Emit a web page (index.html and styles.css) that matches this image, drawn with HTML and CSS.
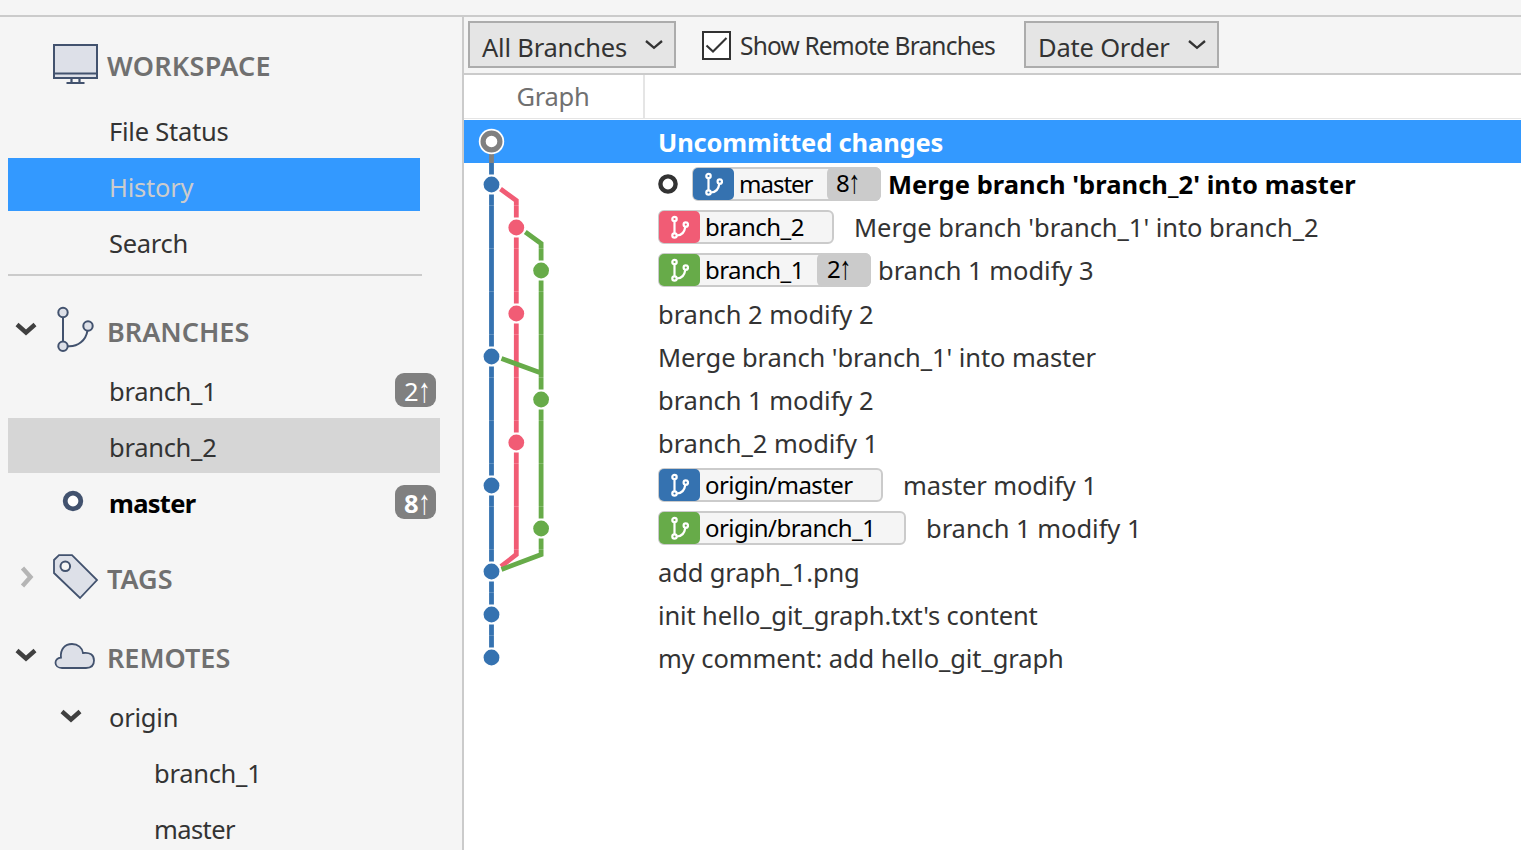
FILE: index.html
```html
<!DOCTYPE html>
<html lang="en">
<head>
<meta charset="utf-8">
<title>Repository history</title>
<link rel="stylesheet" href="styles.css">
</head>
<body>
<svg class="defs" width="0" height="0">
  <symbol id="chev" viewBox="0 0 22 14"><path d="M2 2.500 11 10.500 20 2.500" fill="none" stroke="currentColor" stroke-width="4.400"/></symbol>
  <symbol id="caret" viewBox="0 0 18 12"><path d="M1 2 9 8.800 17 2" fill="none" stroke="currentColor" stroke-width="2.300"/></symbol>
  <symbol id="fork" viewBox="0 0 18 24"><g fill="none" stroke="#fff" stroke-width="2.200"><path d="M3.500 6v12M6 20.500c5 0 7.500-3.500 8.300-8.500"/><circle cx="3.500" cy="4" r="2.200"/><circle cx="3.500" cy="20.500" r="2.200"/><circle cx="14.800" cy="9.600" r="2.200"/></g></symbol>
</svg>
<div class="app">
  <div class="topbar"></div>
  <div class="main">
    <nav class="sidebar">
      <div class="section workspace"><span class="toggle"></span>
        <span class="icon"><svg width="46" height="42" viewBox="0 0 46 42"><rect x="1" y="2" width="43" height="33" fill="#dde0e8" stroke="#42526e" stroke-width="2"/><path d="M2 30.500h41" stroke="#42526e" stroke-width="2"/><path d="M18.500 36v4M26.500 36v4M13.500 40h18" stroke="#42526e" stroke-width="2.200"/></svg></span>
        <h2 class="t-workspace">WORKSPACE</h2></div>
      <div class="item"><span class="t-file">File Status</span></div>
      <div class="item active"><span class="t-history">History</span></div>
      <div class="item"><span class="t-search">Search</span></div>
      <div class="rule"></div>
      <div class="section branches"><span class="toggle"><svg width="22" height="14"><use href="#chev"/></svg></span>
        <span class="icon"><svg width="46" height="48" viewBox="0 0 46 48"><g fill="none" stroke="#42526e" stroke-width="2"><path d="M10 11v24M15 40.300c10 .7 18-6 19.500-16"/><g fill="#dde0e8"><circle cx="10" cy="6.500" r="4.700"/><circle cx="10" cy="40.300" r="4.700"/><circle cx="35" cy="20" r="4.700"/></g></g></svg></span>
        <h2>BRANCHES</h2></div>
      <div class="item"><span class="t-b1">branch_1</span><span class="count">2<i>↑</i></span></div>
      <div class="item hover"><span class="t-b1">branch_2</span></div>
      <div class="item current"><svg class="head" width="22" height="22"><circle cx="11" cy="11" r="7.800" fill="#fff" stroke="#42526e" stroke-width="4.800"/></svg><span class="t-masterb">master</span><span class="count">8<i>↑</i></span></div>
      <div class="section tags"><span class="toggle closed"><svg width="22" height="14"><use href="#chev"/></svg></span>
        <span class="icon"><svg width="46" height="46" viewBox="0 0 46 46"><path d="M1 6 6 1.200H19L44 26 27 44 1 19Z" fill="#dde0e8" stroke="#42526e" stroke-width="1.800"/><circle cx="12.300" cy="12.300" r="4.800" fill="#f5f5f5" stroke="#42526e" stroke-width="2"/></svg></span>
        <h2>TAGS</h2></div>
      <div class="section remotes"><span class="toggle"><svg width="22" height="14"><use href="#chev"/></svg></span>
        <span class="icon"><svg width="46" height="28" viewBox="0 0 46 28"><path d="M9 26C.5 26 .5 16 8 15.700 7 7 12 2 19 2c6 0 10.500 4 11 9 7-1 11 2 11 7.500S37.500 26 33 26Z" fill="#dde0e8" stroke="#42526e" stroke-width="1.800"/></svg></span>
        <h2>REMOTES</h2></div>
      <div class="item"><svg class="expand" width="22" height="14"><use href="#chev"/></svg><span class="t-file">origin</span></div>
      <div class="item nested"><span class="t-b1">branch_1</span></div>
      <div class="item nested"><span class="t-master">master</span></div>
    </nav>
    <section class="content">
      <div class="toolbar">
        <button class="select all"><span class="t-all">All Branches</span><svg width="18" height="12"><use href="#caret"/></svg></button>
        <label class="check"><svg width="29" height="29" viewBox="0 0 29 29"><rect x="1" y="1" width="27" height="27" fill="#fff" stroke="#333" stroke-width="2"/><path d="M4.500 14.500 11 20.500 24.500 7" fill="none" stroke="#333" stroke-width="2.100"/></svg><span class="t-show">Show Remote Branches</span></label>
        <button class="select order"><span class="t-all">Date Order</span><svg width="18" height="12"><use href="#caret"/></svg></button>
      </div>
      <div class="columns"><div class="graph-head"><span>Graph</span></div></div>
      <div class="log">
        <div class="row selected"><b class="t-unc">Uncommitted changes</b></div>
        <div class="row"><svg class="ring" width="20" height="20"><circle cx="10" cy="10" r="7.600" fill="#fff" stroke="#333" stroke-width="4.400"/></svg><span class="ref r-master"><span class="mark blue"><svg width="18" height="24"><use href="#fork"/></svg></span><span class="name t-rmaster">master</span><span class="ahead">8<i>↑</i></span></span><b class="t-merge">Merge branch 'branch_2' into master</b></div>
        <div class="row"><span class="ref r-b2"><span class="mark pink"><svg width="18" height="24"><use href="#fork"/></svg></span><span class="name">branch_2</span></span><span class="msg">Merge branch 'branch_1' into branch_2</span></div>
        <div class="row"><span class="ref r-b1"><span class="mark green"><svg width="18" height="24"><use href="#fork"/></svg></span><span class="name">branch_1</span><span class="ahead two">2<i>↑</i></span></span><span class="msg">branch 1 modify 3</span></div>
        <div class="row"><span class="msg">branch 2 modify 2</span></div>
        <div class="row"><span class="msg mid">Merge branch 'branch_1' into master</span></div>
        <div class="row"><span class="msg">branch 1 modify 2</span></div>
        <div class="row"><span class="msg">branch_2 modify 1</span></div>
        <div class="row"><span class="ref r-om"><span class="mark blue"><svg width="18" height="24"><use href="#fork"/></svg></span><span class="name">origin/master</span></span><span class="msg tight">master modify 1</span></div>
        <div class="row"><span class="ref r-ob"><span class="mark green"><svg width="18" height="24"><use href="#fork"/></svg></span><span class="name">origin/branch_1</span></span><span class="msg">branch 1 modify 1</span></div>
        <div class="row"><span class="msg tight">add graph_1.png</span></div>
        <div class="row"><span class="msg tight">init hello_git_graph.txt's content</span></div>
        <div class="row"><span class="msg mid">my comment: add hello_git_graph</span></div>
        <svg class="graph" width="180" height="559" viewBox="0 0 180 559">
          <g fill="none" stroke-width="4.800">
            <path d="M27.500 32V43" stroke="#808080"/>
            <g stroke="#3572b0"><path d="M27.500 43V54.500M27.500 74.500V226.500M27.500 246.500V355.500M27.500 375.500V441.500M27.500 461.500V484.500M27.500 504.500V527.500"/></g>
            <path d="M36.500 69 52.300 80.500V97.500M52.300 117.500V183.500M52.300 203.500V312.500M52.300 332.500V434.500L37 446.500" stroke="#f15c75"/>
            <path d="M61.300 112 77.100 123.500V140.500M77.100 160.500V269.500M77.100 289.500V398.500M77.100 418.500V434.500L37.500 449.500M37.500 238.500 77.100 253" stroke="#67ab49"/>
          </g>
          <path d="M24 85.500H80M24 128.500H80M24 171.500H80M24 214.500H80M24 257.500H80M24 300.500H80M24 343.500H80M24 386.500H80M24 429.500H80M24 472.500H80M24 515.500H80" stroke="#fff" stroke-opacity=".2"/>
          <circle cx="27.500" cy="21.500" r="12.700" fill="#fff"/><circle cx="27.500" cy="21.500" r="8.400" fill="#fff" stroke="#808080" stroke-width="5.200"/>
          <g fill="#3572b0"><circle cx="27.500" cy="64.500" r="7.900"/><circle cx="27.500" cy="236.500" r="7.900"/><circle cx="27.500" cy="365.500" r="7.900"/><circle cx="27.500" cy="451.500" r="7.900"/><circle cx="27.500" cy="494.500" r="7.900"/><circle cx="27.500" cy="537.500" r="7.900"/></g>
          <g fill="#f15c75"><circle cx="52.300" cy="107.500" r="7.900"/><circle cx="52.300" cy="193.500" r="7.900"/><circle cx="52.300" cy="322.500" r="7.900"/></g>
          <g fill="#67ab49"><circle cx="77.100" cy="150.500" r="7.900"/><circle cx="77.100" cy="279.500" r="7.900"/><circle cx="77.100" cy="408.500" r="7.900"/></g>
        </svg>
      </div>
    </section>
  </div>
</div>
</body>
</html>
```
FILE: styles.css
```css
* { box-sizing: border-box; }
body { margin: 0; background: #f5f5f5; color: #333; font: 25.5px/34px "Noto Sans", "Open Sans", sans-serif; letter-spacing: -0.5px; white-space: nowrap; }
h2 { margin: 0; font-size: 27px; line-height: 34px; font-weight: 600; color: #707070; letter-spacing: 0; }
svg { display: block; flex: none; }
i { display: inline-block; font-family: "Liberation Sans", sans-serif; font-style: normal; font-weight: 400; line-height: 1; transform: translateY(-2px) scaleY(1.35); }
.defs { position: absolute; }
.app { width: 1521px; height: 850px; overflow: hidden; display: flex; flex-direction: column; }
.topbar { height: 17px; flex: none; border-bottom: 2px solid #cbcbcb; }
.main { display: flex; flex: 1; min-height: 0; }

/* Letter spacing tuned per label */
.t-workspace { letter-spacing: 0.25px; }
.t-file, .t-history { letter-spacing: -0.23px; }
.t-search, .t-b1 { letter-spacing: -0.28px; }
.t-masterb { letter-spacing: -0.7px; }
.t-master { letter-spacing: -0.6px; }
.t-all { letter-spacing: -0.2px; }
.t-show { padding-top: 2px; font-size: 24.5px; letter-spacing: -0.82px; }
.t-unc { letter-spacing: -0.15px; }
.t-merge { letter-spacing: 0.05px; }
.msg { letter-spacing: -0.04px; }
.msg.mid { letter-spacing: -0.08px; }
.msg.tight { letter-spacing: -0.13px; }

.sidebar { width: 464px; flex: none; border-right: 2px solid #cbcbcb; overflow: hidden; }
.section { display: flex; align-items: center; padding-left: 15px; }
.section h2 { margin: 4px 0 0 8px; }
.toggle { width: 38px; margin-top: -2px; color: #404040; }
.toggle.closed { margin-top: 0; padding-left: 1px; color: #b5b5b5; }
.toggle.closed svg { transform: rotate(-90deg); }
.icon { width: 46px; }
.workspace { height: 85px; padding-top: 8px; }
.branches { height: 86px; padding-top: 22px; }
.tags { height: 88px; padding-top: 6px; }
.remotes { height: 70px; padding-top: 5px; }
.item { height: 56px; margin-left: 8px; padding: 2px 0 0 101px; display: flex; align-items: center; position: relative; }
.item.active { width: 412px; color: #ccc; background: linear-gradient(#3399ff 53.400px, transparent 53.400px); }
.item.hover { width: 431.500px; background: linear-gradient(#d6d6d6 55.300px, transparent 55.300px); }
.item.current { color: #000; font-weight: 700; }
.item.nested { padding-left: 146px; }
.rule { width: 414px; height: 2px; margin: 4px 0 0 8px; background: #cbcbcb; }
.head { position: absolute; left: 54px; top: 16px; }
.expand { position: absolute; left: 52px; top: 21px; color: #404040; }
.count { width: 41px; height: 34px; margin: -2px 26px 0 auto; padding-left: 9px; border-radius: 9px; background: #808080; color: #fff; line-height: 36px; }

.content { flex: 1; min-width: 0; background: #fff; }
.toolbar { height: 58px; background: #f5f5f5; border-bottom: 2px solid #cbcbcb; padding: 4px 0 0 4px; display: flex; align-items: flex-start; }
.select { height: 47px; padding: 4px 11px 0 12px; margin: 0; border: 2px solid #acacac; background: #e5e5e5; color: #333; font: inherit; letter-spacing: inherit; display: flex; align-items: center; justify-content: space-between; }
.select svg { margin-top: -3px; }
.all { width: 208px; }
.order { width: 195px; }
.check { width: 322px; height: 47px; margin-left: 26px; display: flex; align-items: center; gap: 9px; padding-top: 1px; }
.columns { height: 44px; border-bottom: 1px solid #e5e5e5; margin-bottom: 1px; display: flex; }
.graph-head { width: 181px; border-right: 2px solid #e5e5e5; color: #707070; display: flex; align-items: center; justify-content: center; padding: 0 1px 2px 0; letter-spacing: -0.3px; }

.log { position: relative; }
.graph { position: absolute; left: 0; top: 0; }
.row { height: 43px; padding-left: 194px; display: flex; align-items: center; }
.row b { color: #000; }
.selected { background: #3399ff; }
.row.selected b { color: #fff; }
.ring { margin: -1px 14px 0 0; }
.ref { height: 34px; margin-top: -1px; border: 2px solid #cbcbcb; border-radius: 6px; background: #f5f5f5; color: #000; display: flex; align-items: center; font-size: 24px; }
.ref ~ .msg, .ref ~ b { margin-top: -2px; }
.mark { width: 41px; height: 32px; margin-left: -1px; border-radius: 5px; display: flex; align-items: center; justify-content: center; flex: none; }
.mark svg { margin-left: 1px; }
.blue { background: #3572b0; }
.pink { background: #f15c75; }
.green { background: #67ab49; }
.name { margin-left: 5px; letter-spacing: -0.55px; }
.name.t-rmaster { letter-spacing: -1px; }
.ahead { width: 54px; height: 34px; margin: 0 -2px 0 auto; padding-left: 9px; border-radius: 6px; background: #cbcbcb; line-height: 31px; }
.ahead i { margin-left: -1px; }
.ahead.two { padding-left: 10px; }
.r-master { width: 189px; margin-right: 7px; }
.r-b2 { width: 176px; margin-right: 20px; }
.r-b1 { width: 213px; margin-right: 7px; }
.r-om { width: 225px; margin-right: 20px; }
.r-ob { width: 248px; margin-right: 20px; }
```
